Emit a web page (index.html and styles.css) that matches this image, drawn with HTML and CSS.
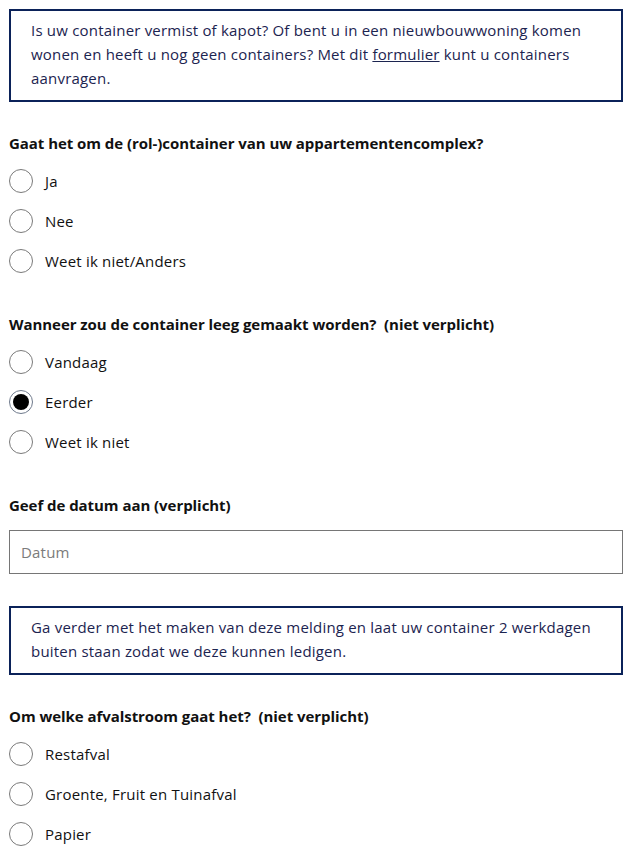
FILE: index.html
```html
<!DOCTYPE html>
<html lang="nl">
<head>
<meta charset="utf-8">
<link rel="stylesheet" href="styles.css">
</head>
<body>
<main class="form">
  <div class="notice notice-first">
    <p>Is uw container vermist of kapot? Of bent u in een nieuwbouwwoning komen wonen en heeft u nog geen containers? Met dit <a href="#">formulier</a> kunt u containers aanvragen.</p>
  </div>

  <fieldset class="question">
    <legend class="q-label">Gaat het om de (rol-)container van uw appartementencomplex?</legend>
    <label class="radio"><span class="dot"></span><span>Ja</span></label>
    <label class="radio"><span class="dot"></span><span>Nee</span></label>
    <label class="radio"><span class="dot"></span><span>Weet ik niet/Anders</span></label>
  </fieldset>

  <fieldset class="question">
    <legend class="q-label">Wanneer zou de container leeg gemaakt worden? &nbsp;(niet verplicht)</legend>
    <label class="radio"><span class="dot"></span><span>Vandaag</span></label>
    <label class="radio"><span class="dot checked"></span><span>Eerder</span></label>
    <label class="radio"><span class="dot"></span><span>Weet ik niet</span></label>
  </fieldset>

  <div class="question date-question">
    <div class="q-label">Geef de datum aan (verplicht)</div>
    <div class="input">Datum</div>
  </div>

  <div class="notice notice-second">
    <p>Ga verder met het maken van deze melding en laat uw container 2 werkdagen buiten staan zodat we deze kunnen ledigen.</p>
  </div>

  <fieldset class="question">
    <legend class="q-label">Om welke afvalstroom gaat het? &nbsp;(niet verplicht)</legend>
    <label class="radio"><span class="dot"></span><span>Restafval</span></label>
    <label class="radio"><span class="dot"></span><span>Groente, Fruit en Tuinafval</span></label>
    <label class="radio"><span class="dot"></span><span>Papier</span></label>
  </fieldset>
</main>
</body>
</html>
```

FILE: styles.css
```css
* { box-sizing: border-box; }
html, body { margin: 0; padding: 0; background: #fff; }
body {
  font-family: "Open Sans", "Liberation Sans", sans-serif;
  font-size: 15px;
  color: #111;
  letter-spacing: 0.2px;
}
.form {
  padding: 9px 9px 0 9px;
  display: flex;
  flex-direction: column;
}
.notice {
  border: 2px solid #0b2259;
  padding: 7px 20px 10px 20px;
  color: #1c2450;
}
.notice p { margin: 0; line-height: 24px; }
.notice a { color: #1c2450; text-decoration: underline; }
.notice-second { margin-top: 32px; }
.question {
  border: 0;
  margin: 0;
  padding: 0;
  min-width: 0;
  display: flex;
  flex-direction: column;
}
fieldset.question { margin-top: 30px; }
fieldset.question + fieldset.question { margin-top: 32px; }
.q-label {
  padding: 0;
  font-weight: 700;
  line-height: 22px;
  margin-bottom: 7px;
  color: #111;
  letter-spacing: -0.05px;
}
.radio {
  display: flex;
  align-items: center;
  gap: 12px;
  height: 40px;
  line-height: 24px;
}
.dot {
  width: 24px;
  height: 24px;
  border: 1.5px solid #7a7a7a;
  border-radius: 50%;
  flex: none;
  display: flex;
  align-items: center;
  justify-content: center;
}
.dot.checked { border-color: #6f7a8c; }
.dot.checked::after {
  content: "";
  width: 16px;
  height: 16px;
  border-radius: 50%;
  background: #000;
}
.date-question { margin-top: 32px; }
.date-question .q-label { margin-bottom: 0; }
.input {
  margin-top: 14px;
  height: 44px;
  border: 1px solid #767676;
  padding: 0 11px;
  display: flex;
  align-items: center;
  color: #7b7b7b;
}
```
